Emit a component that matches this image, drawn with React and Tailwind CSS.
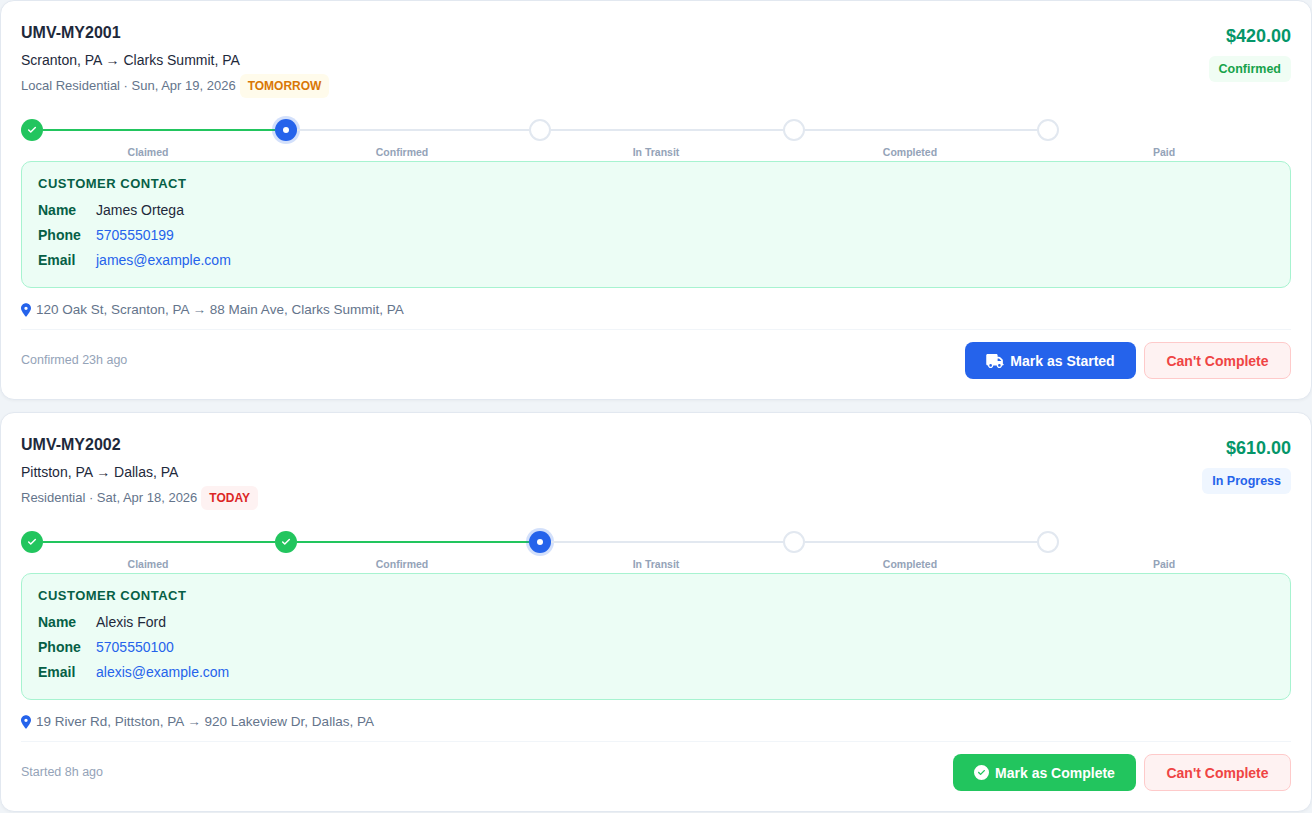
import { Check } from 'lucide-react';

const STEPS = ['Claimed', 'Confirmed', 'In Transit', 'Completed', 'Paid'];

const JOBS = [
  {
    id: 'UMV-MY2001',
    route: 'Scranton, PA → Clarks Summit, PA',
    meta: 'Local Residential · Sun, Apr 19, 2026',
    when: 'TOMORROW',
    whenClass: 'bg-[#fffbeb] text-[#d97706]',
    price: '$420.00',
    status: 'Confirmed',
    statusClass: 'bg-[#f0fdf4] text-[#16a34a]',
    current: 1,
    name: 'James Ortega',
    phone: '5705550199',
    email: 'james@example.com',
    address: '120 Oak St, Scranton, PA → 88 Main Ave, Clarks Summit, PA',
    ago: 'Confirmed 23h ago',
    action: 'Mark as Started',
  },
  {
    id: 'UMV-MY2002',
    route: 'Pittston, PA → Dallas, PA',
    meta: 'Residential · Sat, Apr 18, 2026',
    when: 'TODAY',
    whenClass: 'bg-[#fef2f2] text-[#dc2626]',
    price: '$610.00',
    status: 'In Progress',
    statusClass: 'bg-[#eff6ff] text-[#2563eb]',
    current: 2,
    name: 'Alexis Ford',
    phone: '5705550100',
    email: 'alexis@example.com',
    address: '19 River Rd, Pittston, PA → 920 Lakeview Dr, Dallas, PA',
    ago: 'Started 8h ago',
    action: 'Mark as Complete',
  },
];

function Truck() {
  return (
    <svg width="18" height="14" viewBox="0 0 640 512" fill="currentColor" className="shrink-0">
      <path d="M48 0C21.5 0 0 21.5 0 48v320c0 26.5 21.5 48 48 48h16c0 53 43 96 96 96s96-43 96-96h128c0 53 43 96 96 96s96-43 96-96h32c17.7 0 32-14.3 32-32s-14.3-32-32-32V237.300c0-17-6.700-33.300-18.700-45.300L512 114.700c-12-12-28.300-18.700-45.300-18.700H416V48c0-26.500-21.500-48-48-48H48zm368 160h50.700L544 237.300V256H416v-96zM112 416a48 48 0 1 1 96 0 48 48 0 1 1-96 0zm368-48a48 48 0 1 1 0 96 48 48 0 1 1 0-96z" />
    </svg>
  );
}

function CheckCircle() {
  return (
    <svg width="15" height="15" viewBox="0 0 512 512" fill="currentColor" className="shrink-0">
      <path d="M256 512a256 256 0 1 0 0-512 256 256 0 1 0 0 512zm113-303L241 337c-9.400 9.400-24.600 9.400-33.900 0l-64-64c-9.400-9.400-9.400-24.600 0-33.900s24.600-9.400 33.900 0l47 47L335 175c9.400-9.400 24.600-9.400 33.900 0s9.400 24.600 0 33.900z" />
    </svg>
  );
}

function Pin() {
  return (
    <svg width="10" height="14" viewBox="0 0 384 512" fill="#2563eb" className="shrink-0">
      <path d="M215.700 499.200C267 435 384 279.400 384 192 384 86 298 0 192 0S0 86 0 192c0 87.400 117 243 168.300 307.200 12.300 15.300 35.100 15.300 47.400 0zM192 128a64 64 0 1 1 0 128 64 64 0 1 1 0-128z" />
    </svg>
  );
}

function Stepper({ current }) {
  return (
    <div className="mt-[21px]">
      <div className="flex h-[22px] items-center">
        {STEPS.map((step, i) => (
          <div key={step} className="flex w-[254px] items-center">
            {i < current && (
              <div className="flex size-[22px] shrink-0 items-center justify-center rounded-full bg-[#22c55e] text-white">
                <Check size={10} strokeWidth={3.5} />
              </div>
            )}
            {i === current && (
              <div className="flex size-[22px] shrink-0 items-center justify-center rounded-full bg-[#2563eb] shadow-[0_0_0_3px_rgba(37,99,235,0.2)]">
                <div className="size-[6px] rounded-full bg-white" />
              </div>
            )}
            {i > current && (
              <div className="size-[22px] shrink-0 rounded-full border-2 border-[#e2e8f0] bg-white" />
            )}
            {i < 4 && (
              <div className={`h-[2px] flex-1 ${i < current ? 'bg-[#22c55e]' : 'bg-[#e2e8f0]'}`} />
            )}
          </div>
        ))}
      </div>
      <div className="mt-[5px] flex">
        {STEPS.map((step) => (
          <div key={step} className="w-[254px] text-center text-[10.5px] leading-[12px] font-bold text-[#94a3b8]">
            {step}
          </div>
        ))}
      </div>
    </div>
  );
}

function Contact({ job }) {
  return (
    <div className="mt-[3px] h-[127px] rounded-[10px] border border-[#a7f3d0] bg-[#ecfdf5] px-4 pt-[14px]">
      <div className="text-[13px] leading-[15px] font-bold tracking-[0.5px] text-[#065f46]">CUSTOMER CONTACT</div>
      <div className="mt-[7px] flex flex-col text-sm leading-[25px]">
        <div className="flex">
          <span className="w-[58px] font-bold text-[#065f46]">Name</span>
          <span className="text-[#1e293b]">{job.name}</span>
        </div>
        <div className="flex">
          <span className="w-[58px] font-bold text-[#065f46]">Phone</span>
          <span className="text-[#2563eb]">{job.phone}</span>
        </div>
        <div className="flex">
          <span className="w-[58px] font-bold text-[#065f46]">Email</span>
          <span className="text-[#2563eb]">{job.email}</span>
        </div>
      </div>
    </div>
  );
}

function JobCard({ job }) {
  const complete = job.current === 2;
  return (
    <div className="h-[400px] rounded-[14px] border border-[#e2e8f0] bg-white px-5 pt-5 shadow-[0_1px_3px_rgba(0,0,0,0.04)]">
      <div className="flex items-start justify-between">
        <div>
          <div className="text-base leading-6 font-bold text-[#1e293b]">{job.id}</div>
          <div className="mt-[3px] text-sm leading-6 text-[#1e293b]">{job.route}</div>
          <div className="mt-[2px] flex h-6 items-center text-[13px] text-[#64748b]">
            <span>{job.meta}</span>
            <span className={`ml-1 rounded-md px-2 py-[3px] text-xs leading-[18px] font-bold ${job.whenClass}`}>{job.when}</span>
          </div>
        </div>
        <div className="flex flex-col items-end pt-[3px]">
          <div className="text-lg leading-6 font-bold text-[#059669]">{job.price}</div>
          <div className={`mt-2 rounded-md px-[10px] py-[4px] text-[12.5px] leading-[18px] font-bold ${job.statusClass}`}>{job.status}</div>
        </div>
      </div>
      <Stepper current={job.current} />
      <Contact job={job} />
      <div className="mt-3 flex h-[20px] items-center gap-[5px] text-[13.5px] text-[#64748b]">
        <Pin />
        <span>{job.address}</span>
      </div>
      <div className="mt-[9px] flex items-center justify-between border-t border-[#f1f5f9] pt-3">
        <div className="text-[12.5px] text-[#94a3b8]">{job.ago}</div>
        <div className="flex gap-2">
          <button className={`flex h-[37px] items-center justify-center gap-[6px] rounded-lg text-sm font-bold text-white ${complete ? 'w-[183px] bg-[#22c55e]' : 'w-[171px] bg-[#2563eb]'}`}>
            {complete ? <CheckCircle /> : <Truck />}
            {job.action}
          </button>
          <button className="h-[37px] w-[147px] rounded-lg border border-[#fecaca] bg-[#fef2f2] text-sm font-bold text-[#ef4444]">
            Can't Complete
          </button>
        </div>
      </div>
    </div>
  );
}

export default function App() {
  return (
    <div className="flex h-[813px] flex-col gap-3 overflow-hidden bg-[#f0f4f8] font-['Liberation_Sans',Arial,sans-serif]">
      {JOBS.map((job) => (
        <JobCard key={job.id} job={job} />
      ))}
    </div>
  );
}
